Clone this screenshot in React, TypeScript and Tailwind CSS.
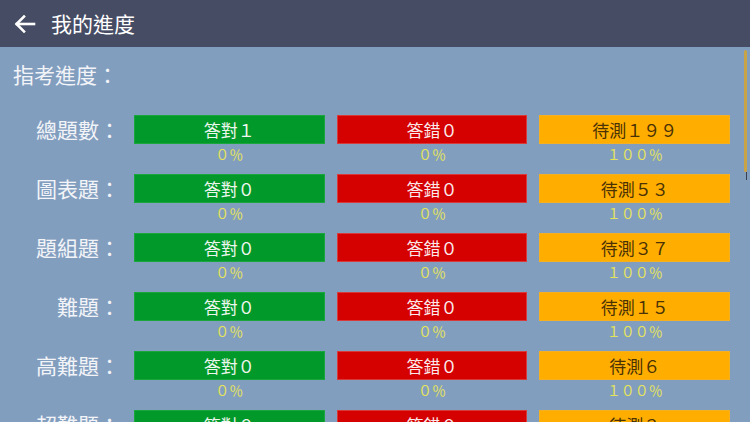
import React from 'react';

interface Row {
  label: string;
  right: string;
  wrong: string;
  pending: string;
  pendingPct: string;
}

const rows: Row[] = [
  { label: '總題數：', right: '答對１', wrong: '答錯０', pending: '待測１９９', pendingPct: '１００％' },
  { label: '圖表題：', right: '答對０', wrong: '答錯０', pending: '待測５３', pendingPct: '１００％' },
  { label: '題組題：', right: '答對０', wrong: '答錯０', pending: '待測３７', pendingPct: '１００％' },
  { label: '難題：', right: '答對０', wrong: '答錯０', pending: '待測１５', pendingPct: '１００％' },
  { label: '高難題：', right: '答對０', wrong: '答錯０', pending: '待測６', pendingPct: '１００％' },
  { label: '超難題：', right: '答對０', wrong: '答錯０', pending: '待測３', pendingPct: '１００％' },
];

const Cell = ({ text, pct, tone }: { text: string; pct: string; tone: 'green' | 'red' | 'orange' }) => {
  const bar =
    tone === 'green'
      ? 'bg-[#019a2a] border-[#1aa63c] text-[#eef6ee]'
      : tone === 'red'
      ? 'bg-[#d50000] border-[#d83a3a] text-[#fbeaea]'
      : 'bg-[#ffae00] border-[#f4b020] text-[#4a3204]';
  return (
    <div className="flex flex-col">
      <div className={`h-[29px] border flex items-center justify-center text-[17px] leading-none ${bar}`}>
        {text}
      </div>
      <div className="h-[20px] flex items-center justify-center text-[14px] leading-none text-[#e4e35c]">
        {pct}
      </div>
    </div>
  );
};

export default function App() {
  return (
    <div
      className="w-[750px] h-[422px] overflow-hidden bg-[#829ebf] relative"
      style={{ fontFamily: '"Noto Sans CJK TC", "Noto Sans", sans-serif' }}
    >
      {/* Header */}
      <div className="h-[47px] bg-[#454c63] flex items-center pl-[13px] text-white">
        <svg width="24" height="24" viewBox="0 0 24 24" fill="none" stroke="white" strokeWidth="2.6" strokeLinecap="square">
          <path d="M21 12H4" />
          <path d="M11 4.5L3.5 12L11 19.5" />
        </svg>
        <span className="ml-[14px] text-[21px] leading-none">我的進度</span>
      </div>

      {/* Body */}
      <div className="pt-[15px] pl-[13px]">
        <div className="text-[21px] leading-[25px] text-[#f2f4f8]">指考進度：</div>
      </div>

      <div className="mt-[28px] flex flex-col gap-[10px] pr-[20px]">
        {rows.map((r) => (
          <div key={r.label} className="flex items-start">
            <div className="w-[122px] h-[29px] flex items-center justify-end pr-[2px] text-[21px] leading-none text-[#f2f4f8] whitespace-nowrap">
              {r.label}
            </div>
            <div className="ml-[12px] grid grid-cols-3 gap-[12px] w-[596px]">
              <Cell text={r.right} pct="０％" tone="green" />
              <Cell text={r.wrong} pct="０％" tone="red" />
              <Cell text={r.pending} pct={r.pendingPct} tone="orange" />
            </div>
          </div>
        ))}
      </div>

      {/* Scrollbar */}
      <div className="absolute right-[3px] top-[50px] w-[3px] h-[122px] bg-[#c9a446] rounded-full" />
      <div className="absolute right-[3px] top-[172px] w-[1px] h-[8px] bg-[#3a3f4f]" />
    </div>
  );
}
